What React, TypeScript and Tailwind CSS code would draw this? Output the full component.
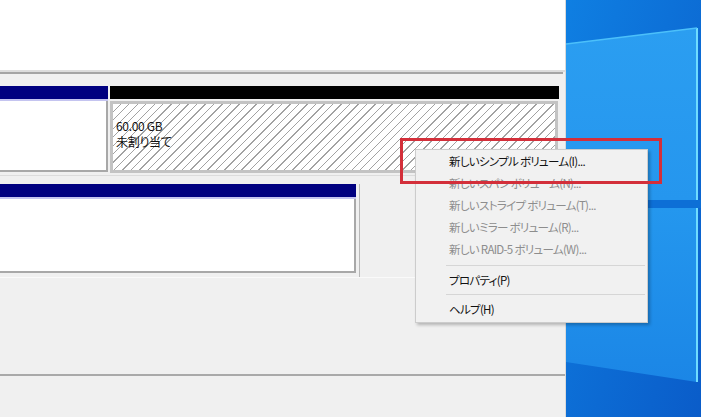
import React from 'react'

const font = { fontFamily: '"Noto Sans CJK JP", "Noto Sans", sans-serif' }

function MenuItem({ label, disabled }: { label: string; disabled?: boolean }) {
  return (
    <div
      className={`h-[22px] flex items-center pl-[33px] text-[11.5px] tracking-[-0.7px] [font-feature-settings:'palt'] ${
        disabled ? 'text-[#8d8d8d]' : 'text-[#111]'
      }`}
    >
      {label}
    </div>
  )
}

function Desktop() {
  return (
    <svg width="135" height="417" viewBox="0 0 135 417" className="block">
      <defs>
        <linearGradient id="sky" x1="0" y1="0" x2="1" y2="1">
          <stop offset="0" stopColor="#0f7fe2" />
          <stop offset="1" stopColor="#0a5cc9" />
        </linearGradient>
        <linearGradient id="pane1" x1="0" y1="0" x2="0" y2="1">
          <stop offset="0" stopColor="#2b9ef1" />
          <stop offset="1" stopColor="#2596ee" />
        </linearGradient>
        <linearGradient id="pane2" x1="0" y1="0" x2="0" y2="1">
          <stop offset="0" stopColor="#2497ee" />
          <stop offset="1" stopColor="#1b86e6" />
        </linearGradient>
      </defs>
      <rect width="135" height="417" fill="url(#sky)" />
      <polygon points="0,44 131,28 131,200 0,200" fill="url(#pane1)" />
      <polygon points="0,208 131,208 131,382 0,362" fill="url(#pane2)" />
      <line x1="131" y1="28" x2="131" y2="200" stroke="#6fdcff" strokeWidth="2" />
      <line x1="131" y1="208" x2="131" y2="382" stroke="#6fdcff" strokeWidth="2" />
      <line x1="0" y1="44" x2="131" y2="28" stroke="#4cc0fa" strokeWidth="1.5" />
      <rect x="0" y="200" width="135" height="8" fill="#0d6fd6" />
    </svg>
  )
}

export default function App() {
  return (
    <div className="relative w-[701px] h-[417px] flex overflow-hidden bg-[#f0f0f0]" style={font}>
      {/* disk management window */}
      <div className="w-[566px] flex flex-col border-r border-[#dadada]">
        <div className="h-[70px] bg-white" />
        <div className="h-[2px] bg-[#dcdcdc]" />
        <div className="h-[2px] bg-[#a4a4a4] mr-[2px]" />

        {/* disk row 1 */}
        <div className="h-[102px] pt-[12px] flex gap-[2px] border-b border-[#dcdcdc]">
          <div className="w-[108px] flex flex-col">
            <div className="h-[13px] bg-[#000080]" />
            <div className="h-[2px] bg-[#c4c4f0]" />
            <div className="h-[71px] bg-white border-r-2 border-b-2 border-[#a8a8a8]" />
          </div>
          <div className="w-[450px] flex flex-col">
            <div className="h-[13px] bg-black mr-[1px]" />
            <div className="h-[2px]" />
            <div className="h-[72px] border-[3px] border-[#c3c3c3] mr-[2px] bg-[repeating-linear-gradient(135deg,#ffffff_0px,#ffffff_5px,#a2a2a2_5px,#a2a2a2_6px)] pt-[14px] pl-[3px] text-[12px] leading-[16px] tracking-[-0.3px] text-[#111] [font-feature-settings:'palt']">
              <div>60.00 GB</div>
              <div>未割り当て</div>
            </div>
          </div>
        </div>

        {/* disk row 2 */}
        <div className="h-[102px] pt-[8px] flex border-b border-[#fafafa]">
          <div className="w-[360px] pr-[3px] pb-[4px] border-r border-[#b8b8b8] flex flex-col">
            <div className="w-[356px] h-[13px] bg-[#000080]" />
            <div className="h-[2px] bg-[#c4c4f0]" />
            <div className="flex-1 bg-white border-r-2 border-b-2 border-[#a8a8a8]" />
          </div>
        </div>

        <div className="h-[96px]" />
        <div className="h-[2px] bg-[#a9a9a9]" />
        <div className="flex-1" />
      </div>

      <div className="flex-1">
        <Desktop />
      </div>

      {/* context menu */}
      <div className="absolute left-[415px] top-[149px] w-[233px] bg-[#f1f1f1] border border-[#cccccc] shadow-[2px_2px_3px_rgba(0,0,0,0.25)] py-[1px]">
        <MenuItem label="新しいシンプル ボリューム(I)..." />
        <MenuItem label="新しいスパン ボリューム(N)..." disabled />
        <MenuItem label="新しいストライプ ボリューム(T)..." disabled />
        <MenuItem label="新しいミラー ボリューム(R)..." disabled />
        <MenuItem label="新しい RAID-5 ボリューム(W)..." disabled />
        <div className="mx-[30px] mr-[2px] my-[4px] h-px bg-[#d6d6d6]" />
        <MenuItem label="プロパティ(P)" />
        <div className="mx-[30px] mr-[2px] mt-[2px] mb-[4px] h-px bg-[#d6d6d6]" />
        <MenuItem label="ヘルプ(H)" />
      </div>

      {/* highlight box */}
      <div className="absolute left-[400px] top-[138px] w-[262px] h-[46px] border-[3px] border-[#d32f3a]" />
    </div>
  )
}
